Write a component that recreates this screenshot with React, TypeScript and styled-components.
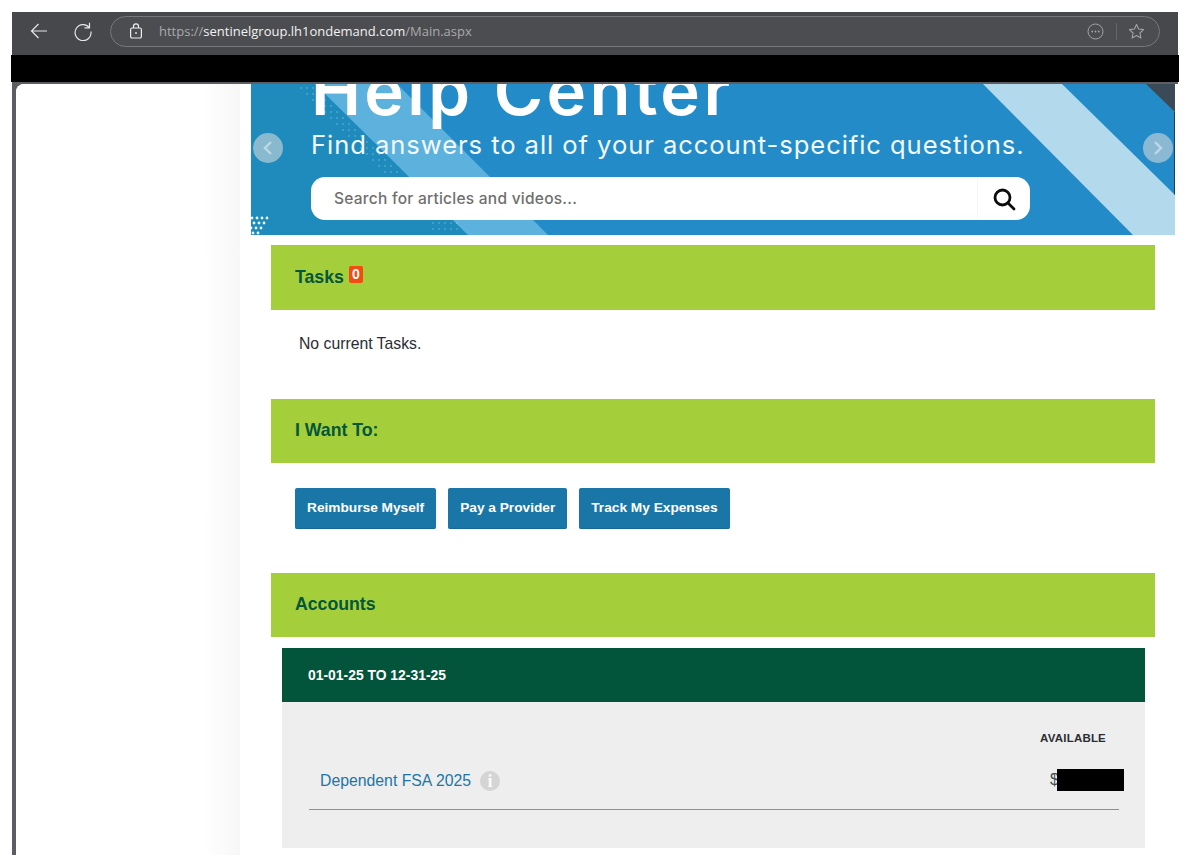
import React from "react";
import styled, { createGlobalStyle } from "styled-components";

const Global = createGlobalStyle`
  html, body { margin: 0; padding: 0; background: #fff; height: 858px; overflow: hidden; }
  * { box-sizing: border-box; }
  body { font-family: "Liberation Sans", Arial, sans-serif; }
`;
const Page = styled.div`
  height: 858px; padding: 12px 17px 3px 12px; display: flex; flex-direction: column;
`;
const TopBar = styled.header`
  height: 43px; flex: none; background: #47484c; display: flex; align-items: center; padding: 0 18px 5px 0;
`;
const NavButton = styled.button`
  width: 44px; height: 30px; border: 0; padding: 0; background: none; color: #e6e6e6;
  display: flex; align-items: center; justify-content: center;
  margin-left: ${p => p.$first ? "5px" : "0"};
`;
const AddressBar = styled.div`
  flex: 1; height: 31px; margin-left: 5px; border: 1px solid #77787c; border-radius: 16px;
  background: #4c4d51; display: flex; align-items: center; padding: 0 14px 0 18px;
`;
const Url = styled.div`
  margin-left: 16px; flex: 1; font: 13px "Open Sans", sans-serif; color: #a9a9ac;
  b { font-weight: 400; color: #f2f2f2; }
`;
const Divider = styled.span`
  width: 1px; height: 17px; background: #66676a; margin: 0 11px 0 12px;
`;
const Redaction = styled.div`
  height: 27px; flex: none; background: #000; margin: 0 -1px;
`;
const Viewport = styled.div`
  flex: 1; min-height: 0; background: #5d5d63; padding: 2px 0 0 4px; display: flex;
`;
const Canvas = styled.div`
  flex: 1; background: #fff; border-top-left-radius: 8px; display: flex; overflow: hidden;
`;
const Sidebar = styled.aside`
  width: 224px; flex: none; background: linear-gradient(90deg, #fff 0%, #fff 84%, #f7f7f7 100%);
`;
const Main = styled.main`
  flex: 1; min-width: 0; padding: 0 3px 0 11px; display: flex; flex-direction: column;
`;
const Banner = styled.section`
  position: relative; height: 151px; flex: none; overflow: hidden; background: #238cc8; color: #fff;
  font-family: "Inter", sans-serif; padding-left: 60px;
`;
const BannerArt = styled.svg`
  position: absolute; inset: 0; width: 100%; height: 100%;
`;
const BannerTitle = styled.div`
  position: relative; font-size: 67px; font-weight: 600; line-height: 66px; margin-top: -26px; height: 66px; letter-spacing: 3.4px; white-space: nowrap;
`;
const BannerSub = styled.div`
  position: relative; font-size: 25.6px; line-height: 30px; margin-top: 6px; letter-spacing: 0.93px; white-space: nowrap; font-weight: 400; color: #f2f9fd;
`;
const SearchBox = styled.div`
  position: relative; width: 719px; height: 43px; margin-top: 17px; background: #fff; border-radius: 14px;
  display: flex; align-items: center; padding-left: 23px; color: #6f6f6f; font-size: 15.5px; font-weight: 500; letter-spacing: 0.25px;
`;
const SearchButton = styled.span`
  margin-left: auto; width: 53px; height: 100%; display: flex; align-items: center; justify-content: center; color: #0c0c0c; border-left: 1px solid #f6f6f6;
`;
const Arrow = styled.span`
  position: absolute; top: 49px; ${p => p.$right ? "right: 2px;" : "left: 2px;"}
  width: 30px; height: 30px; border-radius: 50%; background: rgba(203, 213, 218, 0.62); color: rgba(255,255,255,.45);
  display: flex; align-items: center; justify-content: center;
`;
const Content = styled.div`
  padding: 10px 20px 0; display: flex; flex-direction: column;
`;
const SectionHead = styled.h2`
  margin: 0; height: ${p => p.$h || 64}px; background: #a4cf3a; color: #04563c; display: flex; align-items: center;
  padding: 0 0 2px 24px; font-size: 17.7px; font-weight: 700; line-height: 20px;
`;
const Badge = styled.span`
  align-self: flex-start; margin: 21px 0 0 5px; width: 14px; height: 17px; background: #f24c12; color: #fff; border-radius: 2px;
  font-size: 14px; line-height: 16px; text-align: center;
`;
const Empty = styled.p`
  margin: 0; height: 89px; padding: 25px 0 0 28px; font-size: 15.75px; line-height: 18px; color: #2a2d33;
`;
const Actions = styled.div`
  height: 110px; padding: 25px 0 0 24px; display: flex; gap: 12px; align-items: flex-start;
`;
const ActionButton = styled.button`
  height: 41px; border: 0; border-radius: 2px; padding: 0 12px 1px; background: #1b76a8; color: #fff;
  font: 700 13.7px "Liberation Sans", Arial, sans-serif;
  border-bottom: 1px solid #176a98;
`;
const PeriodWrap = styled.div`
  padding: 11px 10px 0 11px;
`;
const PeriodHead = styled.div`
  height: 54px; background: #02553b; color: #fff; font-size: 13.9px; font-weight: 700; display: flex; align-items: center; padding-left: 26px; padding-bottom: 1px;
`;
const AccountPanel = styled.div`
  height: 146px; background: #eeeeee; padding: 0 26px 0 27px; color: #2a2d33;
`;
const AvailableLabel = styled.div`
  padding: 29px 13px 0 0; height: 61px; text-align: right; font-size: 11.5px; font-weight: 700; line-height: 14px; letter-spacing: 0.2px;
`;
const AccountRow = styled.div`
  height: 47px; display: flex; align-items: flex-start; padding: 6px 0 0 11px; border-bottom: 1px solid #6f9f92;
`;
const AccountLink = styled.a`
  color: #1b76a8; font-size: 15.8px; line-height: 24px; text-decoration: none;
`;
const InfoDot = styled.span`
  width: 20px; height: 20px; margin: 2px 0 0 9px; border-radius: 50%; background: #d4d4d4; color: #fafafa;
  font: 700 18px/20px "Liberation Serif", serif; text-align: center;
`;
const Amount = styled.div`
  margin-left: auto; margin-right: -5px; display: flex; font-size: 16px; line-height: 22px; color: #3d4a55; margin-top: 0;
`;
const Mask = styled.span`
  width: 67px; height: 22px; background: #000; margin-left: -2px;
`;

function Dots({ x, y, cols, rows, op = 0.35, gap = 6, r = 1, skew = 1 }: { x: number; y: number; cols: number; rows: number; op?: number; gap?: number; r?: number; skew?: number }) {
  const out: React.ReactNode[] = [];
  for (let i = 0; i < cols; i++) for (let j = 0; j < rows; j++) {
    out.push(<circle key={i + "-" + j} cx={x + i * gap + j * gap * skew} cy={y + j * gap} r={r} fill="#fff" opacity={op} />);
  }
  return <g>{out}</g>;
}

export default function App() {
  return (
    <Page>
      <Global />
      <TopBar>
        <NavButton $first>
          <svg width="20" height="20" viewBox="0 0 20 20" fill="none" stroke="currentColor" strokeWidth="1.2"><path d="M2.5 10H18M9.5 3 2.5 10l7 7" /></svg>
        </NavButton>
        <NavButton>
          <svg width="20" height="20" viewBox="0 0 20 20" fill="none" stroke="currentColor" strokeWidth="1.2"><path d="M16.5 1.8v5h-5" /><path d="M16.3 6.6A8 8 0 1 0 18 10.5" /></svg>
        </NavButton>
        <AddressBar>
          <svg width="14" height="16" viewBox="0 0 14 16" fill="none" stroke="#ededed" strokeWidth="1.2"><rect x="1.6" y="5" width="10.8" height="10" rx="1.6" /><path d="M4.5 5V3.4a2.5 2.5 0 0 1 5 0V5" /><circle cx="7" cy="10" r=".9" fill="#ededed" stroke="none" /></svg>
          <Url>https://<b>sentinelgroup.lh1ondemand.com</b>/Main.aspx</Url>
          <svg width="17" height="17" viewBox="0 0 17 17" fill="none" stroke="#a3a3a6" strokeWidth="1"><circle cx="8.5" cy="8.5" r="7.5" /><g fill="#a3a3a6" stroke="none"><circle cx="5.2" cy="8.5" r=".9" /><circle cx="8.5" cy="8.5" r=".9" /><circle cx="11.8" cy="8.5" r=".9" /></g></svg>
          <Divider />
          <svg width="17" height="17" viewBox="0 0 17 17" fill="none" stroke="#a3a3a6" strokeWidth="1.1" strokeLinejoin="round"><path d="M8.5 1.4 10.6 6l5 .6-3.7 3.4 1 5-4.4-2.5L4.1 15l1-5L1.4 6.6l5-.6z" /></svg>
        </AddressBar>
      </TopBar>
      <Redaction />
      <Viewport>
        <Canvas>
          <Sidebar />
          <Main>
            <Banner>
              <BannerArt viewBox="0 0 924 151" preserveAspectRatio="none">
                <polygon points="0,0 924,0 924,151 0,151" fill="#238cc8" />
                <polygon points="0,0 64,0 217,151 0,151" fill="#1f8bbd" />
                <polygon points="64,0 146,0 297,151 217,151" fill="#5db1dd" />
                <polygon points="732,0 811,0 924,111 924,151 882,151" fill="#b3d9ec" />
                <polygon points="895,0 924,0 924,28" fill="#3c4957" />
                <polygon points="923,28 924,28 924,111 923,110" fill="#1d3f5a" />
                <Dots x={50} y={4} cols={3} rows={15} op={0.22} />
                <Dots x={182} y={139} cols={5} rows={2} op={0.22} skew={0} />
                <Dots x={1} y={134} cols={4} rows={4} op={0.9} gap={5} r={1.4} skew={-0.6} />
              </BannerArt>
              <BannerTitle>Help Center</BannerTitle>
              <BannerSub>Find answers to all of your account-specific questions.</BannerSub>
              <SearchBox>
                Search for articles and videos...
                <SearchButton>
                  <svg width="24" height="24" viewBox="0 0 24 24" fill="none" stroke="currentColor" strokeWidth="2.8" strokeLinecap="round"><circle cx="10.5" cy="10.5" r="7.5" /><path d="m16 16 6 6" /></svg>
                </SearchButton>
              </SearchBox>
              <Arrow>
                <svg width="12" height="16" viewBox="0 0 12 16" fill="none" stroke="currentColor" strokeWidth="2.4"><path d="M9 2 3 8l6 6" /></svg>
              </Arrow>
              <Arrow $right>
                <svg width="12" height="16" viewBox="0 0 12 16" fill="none" stroke="currentColor" strokeWidth="2.4"><path d="m3 2 6 6-6 6" /></svg>
              </Arrow>
            </Banner>
            <Content>
              <SectionHead $h={65}>Tasks<Badge>0</Badge></SectionHead>
              <Empty>No current Tasks.</Empty>
              <SectionHead>I Want To:</SectionHead>
              <Actions>
                <ActionButton>Reimburse Myself</ActionButton>
                <ActionButton>Pay a Provider</ActionButton>
                <ActionButton>Track My Expenses</ActionButton>
              </Actions>
              <SectionHead>Accounts</SectionHead>
              <PeriodWrap>
                <PeriodHead>01-01-25 TO 12-31-25</PeriodHead>
                <AccountPanel>
                  <AvailableLabel>AVAILABLE</AvailableLabel>
                  <AccountRow>
                    <AccountLink href="#">Dependent FSA 2025</AccountLink>
                    <InfoDot>i</InfoDot>
                    <Amount>$<Mask /></Amount>
                  </AccountRow>
                </AccountPanel>
              </PeriodWrap>
            </Content>
          </Main>
        </Canvas>
      </Viewport>
    </Page>
  );
}
